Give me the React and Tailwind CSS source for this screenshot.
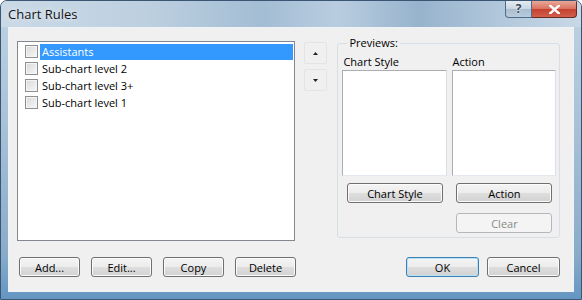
import React from 'react';

const items = [
    { label: 'Assistants', selected: true },
    { label: 'Sub-chart level 2' },
    { label: 'Sub-chart level 3+' },
    { label: 'Sub-chart level 1' },
];

function Btn({ children, className = '', primary = false, disabled = false }) {
    let look = 'border-[#707070] bg-[linear-gradient(to_bottom,#f4f4f4_0%,#ececec_50%,#dedede_50%,#d2d2d2_100%)] text-black shadow-[inset_0_0_0_1px_#fbfbfb]';
    if (primary) look = 'border-[#3c7fb1] bg-[linear-gradient(to_bottom,#f4f4f4_0%,#ececec_50%,#dedede_50%,#d2d2d2_100%)] text-black shadow-[inset_0_0_0_1px_#b9e2f7]';
    if (disabled) look = 'border-[#b5b8ba] bg-[#f4f4f4] text-[#8a8a8a]';
    return (
        <button className={`h-[20px] rounded-[3px] border text-[11px] leading-none ${look} ${className}`}>
            {children}
        </button>
    );
}

function ArrowBtn({ up }) {
    return (
        <div className="w-[23px] h-[22px] rounded-[2px] border border-[#e4e4e4] flex items-center justify-center">
            <svg width="5" height="3" viewBox="0 0 5 3">
                {up ? <path d="M2.5 0 L5 3 L0 3 Z" fill="#222" /> : <path d="M0 0 L5 0 L2.5 3 Z" fill="#222" />}
            </svg>
        </div>
    );
}

export default function App() {
    return (
        <div className="w-[582px] h-[300px] flex flex-col rounded-t-[7px] border border-[#3b5673] bg-[linear-gradient(to_bottom,#bfd2e3_0%,#a9c2d8_40%,#89abca_85%,#6496c2_100%)] font-['Open_Sans','Noto_Sans',sans-serif] overflow-hidden">
            {/* Title bar */}
            <div className="h-[26px] flex items-start justify-between bg-[linear-gradient(to_right,#cad9e6_0%,#bdd0e0_25%,#a3bdd4_45%,#b9cde0_58%,#97b3cc_72%,#b5cadd_88%,#c8d8e6_100%)]">
                <span className="ml-[7px] mt-[6px] text-[13px] leading-[14px] text-[#151515] [text-shadow:0_0_6px_#ffffff]">
                    Chart Rules
                </span>
                <div className="flex mr-[4px]">
                    <div className="w-[27px] h-[17px] rounded-bl-[4px] border border-t-0 border-[#4f6c8a] bg-[linear-gradient(to_bottom,#e3ebf2_0%,#c9d6e2_50%,#a9bdd0_50%,#b9ccdd_100%)] flex items-center justify-center text-[12px] font-bold leading-none text-[#394a5b] [text-shadow:0_0_2px_#ffffff]">
                        ?
                    </div>
                    <div className="w-[45px] h-[17px] rounded-br-[4px] border border-t-0 border-l-0 border-[#6a2a22] bg-[linear-gradient(to_bottom,#e9a899_0%,#d9705f_50%,#c5402f_50%,#d0604c_100%)] flex items-center justify-center">
                        <svg width="11" height="9" viewBox="0 0 11 9">
                            <path d="M1 0.5 L10 8.5 M10 0.5 L1 8.5" stroke="#ffffff" strokeWidth="2.4" strokeLinecap="square" />
                        </svg>
                    </div>
                </div>
            </div>

            {/* Client area */}
            <div className="flex-1 mx-[7px] mb-[7px] border border-[#eef3f8] bg-[#f0f0f0] flex flex-col pl-[8px] pt-[13px] pr-[13px]">
                <div className="flex items-start">
                    {/* Rules list */}
                    <div className="w-[279px] h-[200px] border border-[#828790] bg-white pt-[1px]">
                        {items.map((it) => (
                            <div key={it.label} className="h-[17px] flex items-center">
                                <div className="ml-[7px] w-[13px] h-[13px] border border-[#8f8f8f] bg-[linear-gradient(135deg,#d8d8d8,#f8f8f8)] shadow-[inset_0_0_0_1px_#f4f4f4]" />
                                <div
                                    className={`ml-[2px] mr-[1px] flex-1 h-[16px] pl-[2px] flex items-center text-[11px] leading-none ${it.selected ? 'bg-[#3399ff] text-white' : 'text-black'}`}
                                >
                                    {it.label}
                                </div>
                            </div>
                        ))}
                    </div>

                    {/* Move up / down */}
                    <div className="ml-[9px] mt-[1px] flex flex-col gap-[5px]">
                        <ArrowBtn up />
                        <ArrowBtn />
                    </div>

                    {/* Previews group */}
                    <fieldset className="ml-[10px] mt-[-6px] w-[223px] rounded-[3px] border border-[#d5dfe5] pl-[4px] pr-[2px] pb-[4px]">
                        <legend className="ml-[5px] px-[2px] text-[11px] leading-[16px] text-black">Previews:</legend>
                        <div className="flex gap-[5px] mt-[3px]">
                            <div className="w-[105px] flex flex-col items-center">
                                <div className="self-stretch pl-[1px] text-[11px] leading-[16px] text-black">Chart Style</div>
                                <div className="self-stretch h-[106px] border border-[#abadb3] border-r-[#dbdfe6] border-b-[#e3e9ef] bg-white" />
                                <Btn className="mt-[7px] w-[96px]">Chart Style</Btn>
                            </div>
                            <div className="w-[104px] flex flex-col items-center">
                                <div className="self-stretch text-[11px] leading-[16px] text-black">Action</div>
                                <div className="self-stretch h-[106px] border border-[#abadb3] border-r-[#dbdfe6] border-b-[#e3e9ef] bg-white" />
                                <Btn className="mt-[7px] w-[96px]">Action</Btn>
                                <Btn className="mt-[10px] w-[96px]" disabled>Clear</Btn>
                            </div>
                        </div>
                    </fieldset>
                </div>

                {/* Bottom buttons */}
                <div className="mt-[16px] flex items-center justify-between">
                    <div className="ml-[2px] flex gap-[11px]">
                        <Btn className="w-[61px]">Add...</Btn>
                        <Btn className="w-[61px]">Edit...</Btn>
                        <Btn className="w-[61px]">Copy</Btn>
                        <Btn className="w-[61px]">Delete</Btn>
                    </div>
                    <div className="flex gap-[8px]">
                        <Btn className="w-[73px]" primary>OK</Btn>
                        <Btn className="w-[73px]">Cancel</Btn>
                    </div>
                </div>
            </div>
        </div>
    );
}
